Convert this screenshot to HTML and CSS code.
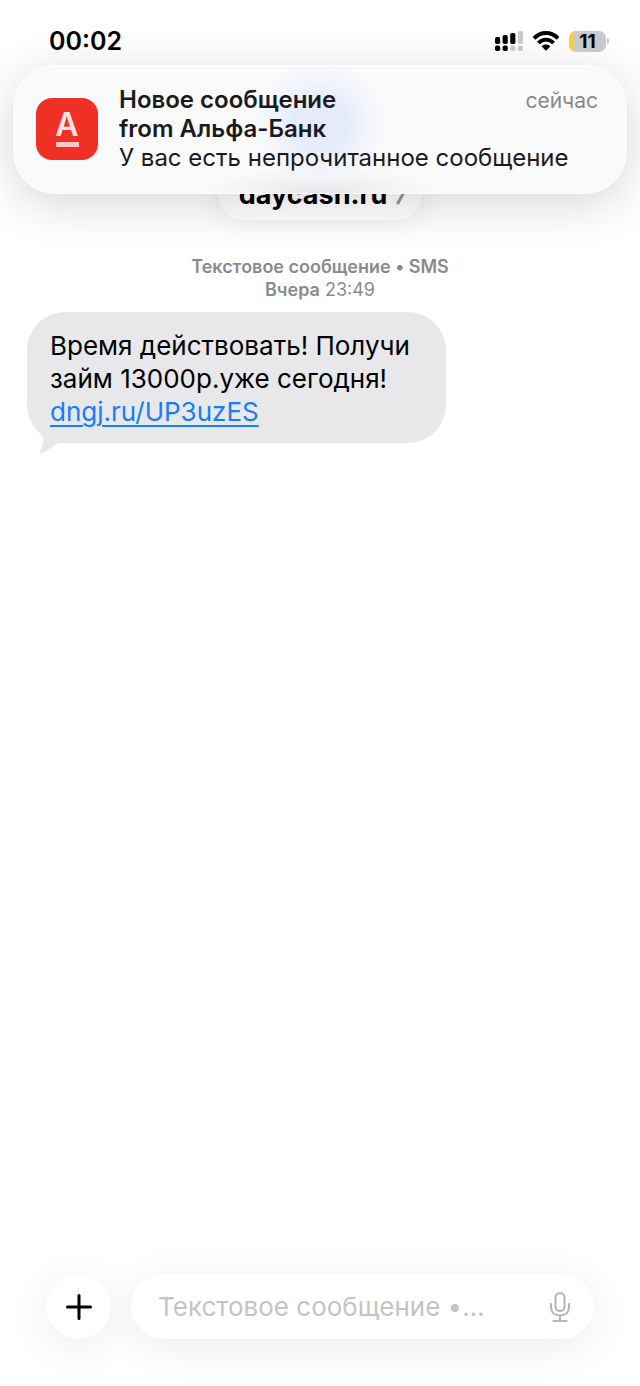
FILE: index.html
```
<!DOCTYPE html>
<html lang="ru">

<head>
    <meta charset="UTF-8">
    <meta name="viewport" content="width=device-width, initial-scale=1.0">
    <title>daycash.ru</title>
    <link rel="stylesheet" href="styles.css">
</head>

<body>
    <div class="status-bar">
        <time class="clock">00:02</time>
        <div class="status-icons">
            <svg class="icon-signal" viewBox="0 0 28 20" width="28" height="20" aria-hidden="true">
                <g fill="#000">
                    <rect x="0" y="6" width="5.2" height="7" rx="1.8" />
                    <rect x="7.6" y="4" width="5.2" height="9" rx="1.8" />
                    <rect x="15.2" y="2" width="5.2" height="11" rx="1.8" />
                    <rect x="0" y="14.6" width="5.2" height="5.4" rx="1.8" />
                    <rect x="7.6" y="14.6" width="5.2" height="5.4" rx="1.8" />
                </g>
                <g fill="#c9c9c9">
                    <rect x="22.8" y="0" width="5.2" height="13" rx="1.8" />
                    <rect x="15.2" y="14.6" width="5.2" height="5.4" rx="1.8" />
                    <rect x="22.8" y="14.6" width="5.2" height="5.4" rx="1.8" />
                </g>
            </svg>
            <svg class="icon-wifi" viewBox="0 0 28 20" width="28" height="20" aria-hidden="true">
                <g fill="none" stroke="#000" stroke-width="3.8">
                    <path d="M2 7.4 C8.8 .2 19.2 .2 26 7.4" />
                    <path d="M6.4 12 C10.8 7.5 17.2 7.5 21.6 12" />
                </g>
                <path d="M9.6 15.3 C12.2 12.9 15.8 12.9 18.4 15.3 L14.6 19.2 Q14 19.8 13.4 19.2 Z" />
            </svg>
            <div class="battery">
                <span class="battery-level">11</span>
                <span class="battery-cap"></span>
            </div>
        </div>
    </div>

    <!-- Уведомление поверх переписки -->
    <aside class="banner">
        <div class="bank-logo"><span class="bank-letter">А</span></div>
        <div class="banner-body">
            <div class="banner-head">
                <h2 class="banner-title">Новое сообщение<br>from Альфа-Банк</h2>
                <time class="banner-time">сейчас</time>
            </div>
            <p class="banner-text">У вас есть непрочитанное сообщение</p>
        </div>
    </aside>

    <header class="chat-header">
        <button class="contact" type="button">
            <span>daycash.ru</span>
            <svg viewBox="0 0 10 22" width="10" height="22" aria-hidden="true">
                <path d="M3 2 L8 10 L3 19" fill="none" stroke="#999" stroke-width="3" stroke-linecap="round" stroke-linejoin="round" />
            </svg>
        </button>
    </header>

    <main class="chat">
        <p class="chat-date"><b>Текстовое сообщение • SMS</b><br><b>Вчера</b> 23:49</p>
        <div class="bubble">
            <p>Время действовать! Получи<br>займ 13000р.уже сегодня!<br><a href="#">dngj.ru/UP3uzES</a></p>
            <svg class="bubble-tail" viewBox="0 0 30 24" width="30" height="24" aria-hidden="true">
                <path d="M0 0 C5 6 6 11 1 21 Q0 23 3 22 C10 19 14 15 20 12 L30 12 L30 0 Z" fill="#e8e8ea" />
            </svg>
        </div>
    </main>

    <form class="composer">
        <button class="add-button" type="button" aria-label="Добавить">
            <svg viewBox="0 0 26 26" width="26" height="26" aria-hidden="true">
                <path d="M13 1.5 V24.5 M1.5 13 H24.5" stroke="#000" stroke-width="3" stroke-linecap="round" />
            </svg>
        </button>
        <div class="field">
            <input class="field-input" type="text" placeholder="Текстовое сообщение •..." aria-label="Текстовое сообщение">
            <button class="mic-button" type="button" aria-label="Диктовка">
                <svg viewBox="0 0 20 30" width="20" height="30" aria-hidden="true">
                    <g fill="none" stroke="#b4b4b9" stroke-width="2" stroke-linecap="round">
                        <rect x="5.5" y="1" width="9" height="18" rx="4.5" />
                        <path d="M1 12 V15 C1 20.5 5 23.5 10 23.5 C15 23.5 19 20.5 19 15 V12 M10 23.5 V29 M3.5 29 H16.5" />
                    </g>
                </svg>
            </button>
        </div>
    </form>
</body>

</html>
```
FILE: styles.css
```
* {
    box-sizing: border-box;
}

body {
    position: relative;
    display: flex;
    flex-direction: column;
    min-height: 100vh;
    margin: 0;
    overflow-x: hidden;
    background: #fff;
    color: #000;
    font-family: Inter, "Noto Sans", sans-serif;
}

p,
h2 {
    margin: 0;
}

button {
    padding: 0;
    border: 0;
    background: none;
    color: inherit;
    font: inherit;
}

/* Строка состояния */
.status-bar {
    position: relative;
    z-index: 3;
    display: flex;
    justify-content: space-between;
    align-items: center;
    height: 82px;
    padding: 0 31px 0 49px;
}

.clock {
    font-size: 25px;
    font-weight: 600;
}

.status-icons {
    display: flex;
    align-items: center;
    gap: 9px;
}

.battery {
    display: flex;
    align-items: center;
    gap: 1px;
}

.battery-level {
    width: 37px;
    border-radius: 7px;
    background: linear-gradient(to right, #fc3 4px, #c9c9c9 4px);
    font-size: 19px;
    font-weight: 700;
    line-height: 21px;
    text-align: center;
}

.battery-cap {
    width: 2px;
    height: 6px;
    border-radius: 0 2px 2px 0;
    background: #c9c9c9;
}

/* Уведомление */
.banner {
    position: absolute;
    z-index: 2;
    top: 65px;
    left: 13px;
    right: 13px;
    display: flex;
    align-items: center;
    gap: 21px;
    padding: 19px 28px 21px 22px;
    border: 1px solid #fff;
    border-radius: 42px;
    background:
        radial-gradient(ellipse 68px 64px at 50% 46%, #e4eafb 0%, #e6ecfb 40%, rgba(238, 242, 252, 0.7) 70%, rgba(250, 250, 251, 0) 100%),
        radial-gradient(ellipse 120px 26px at 50% 100%, #e8e8ea, rgba(250, 250, 251, 0)),
        #fafafb;
    box-shadow: 0 10px 50px rgba(0, 0, 0, 0.16);
}

.bank-logo {
    display: flex;
    flex-direction: column;
    align-items: center;
    gap: 1px;
    flex: none;
    width: 62px;
    height: 62px;
    padding-top: 11px;
    border-radius: 16px;
    background: #ef3025;
    color: #fde3e2;
}

.bank-letter {
    font-size: 32px;
    font-weight: 600;
    line-height: 32px;
}

.bank-logo::after {
    content: "";
    width: 23px;
    height: 5px;
    background: #fbc6c4;
}

.banner-body {
    flex: 1;
    color: #1b1b1e;
    font-size: 24px;
    line-height: 29px;
}

.banner-head {
    display: flex;
    justify-content: space-between;
}

.banner-title {
    font-size: 24px;
    font-weight: 600;
}

.banner-time {
    color: #88888a;
    font-size: 21px;
    line-height: 32px;
}

/* Шапка чата */
.chat-header {
    display: flex;
    justify-content: center;
    padding-top: 87px;
}

.contact {
    display: flex;
    align-items: center;
    gap: 8px;
    height: 51px;
    padding: 0 17px 0 21px;
    border-radius: 26px;
    background: #fff;
    box-shadow: 0 2px 24px rgba(0, 0, 0, 0.08);
    font-size: 27px;
    font-weight: 700;
}

/* Переписка */
.chat {
    flex: 1;
    padding: 35px 27px;
}

.chat-date {
    color: #8a8a8e;
    font-size: 18px;
    line-height: 23px;
    text-align: center;
}

.chat-date b {
    font-weight: 600;
}

.bubble {
    position: relative;
    width: fit-content;
    margin-top: 11px;
    padding: 17px 36px 15px 23px;
    border-radius: 38px;
    background: #e8e8ea;
    font-size: 26px;
    line-height: 33px;
}

.bubble a {
    color: #157efb;
    text-decoration: underline;
    text-decoration-thickness: 2px;
    text-underline-offset: 4px;
}

.bubble-tail {
    position: absolute;
    left: 12px;
    bottom: -12px;
}

/* Поле ввода */
.composer {
    display: flex;
    gap: 20px;
    padding: 0 46px 47px;
}

.add-button,
.field {
    height: 65px;
    border-radius: 33px;
    background: #fff;
    box-shadow: 0 8px 44px rgba(0, 0, 0, 0.08);
}

.add-button {
    display: grid;
    place-items: center;
    flex: none;
    width: 65px;
}

.field {
    display: flex;
    align-items: center;
    flex: 1;
    min-width: 0;
    padding: 0 24px 0 27px;
}

.field-input {
    flex: 1;
    min-width: 0;
    padding: 0;
    border: 0;
    outline: 0;
    background: none;
    font: inherit;
    font-size: 26px;
    line-height: 33px;
}

.field-input::placeholder {
    color: #c4c4c6;
}

.mic-button {
    display: flex;
}
```
